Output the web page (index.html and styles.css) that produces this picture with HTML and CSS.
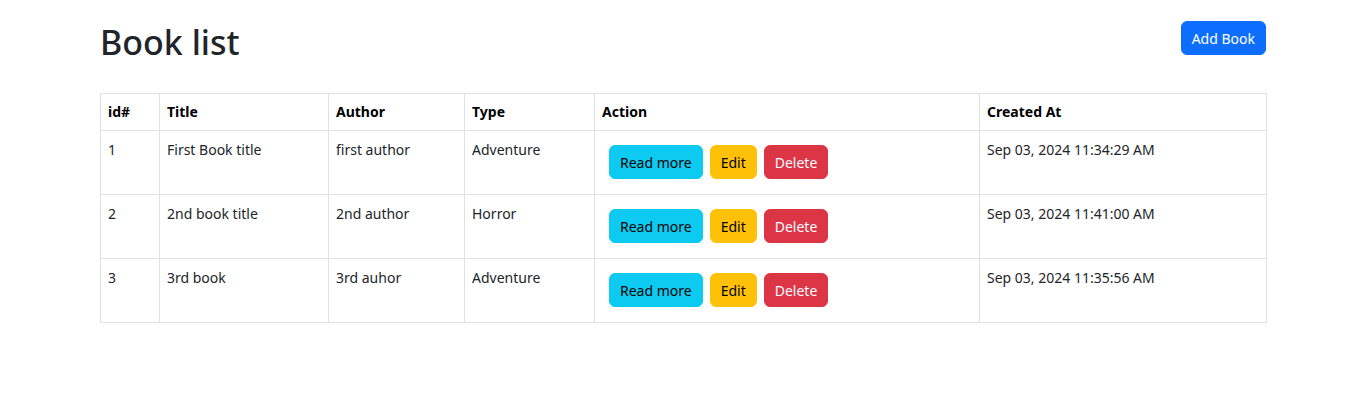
FILE: index.html
```html
<!DOCTYPE html>
<html lang="en">
<head>
<meta charset="utf-8">
<title>Book list</title>
<link rel="stylesheet" href="styles.css">
</head>
<body>
<main class="page">
  <header class="page-head">
    <h1 class="title">Book list</h1>
    <a class="btn btn-primary" href="#">Add Book</a>
  </header>
  <table class="book-table">
    <colgroup>
      <col class="c-id"><col class="c-title"><col class="c-author"><col class="c-type"><col class="c-action"><col class="c-created">
    </colgroup>
    <thead>
      <tr><th>id#</th><th>Title</th><th>Author</th><th>Type</th><th>Action</th><th>Created At</th></tr>
    </thead>
    <tbody>
      <tr>
        <td>1</td><td>First Book title</td><td>first author</td><td>Adventure</td>
        <td class="actions"><div class="btn-group"><a class="btn btn-info" href="#">Read more</a><a class="btn btn-warning" href="#">Edit</a><a class="btn btn-danger" href="#">Delete</a></div></td>
        <td>Sep 03, 2024 11:34:29 AM</td>
      </tr>
      <tr>
        <td>2</td><td>2nd book title</td><td>2nd author</td><td>Horror</td>
        <td class="actions"><div class="btn-group"><a class="btn btn-info" href="#">Read more</a><a class="btn btn-warning" href="#">Edit</a><a class="btn btn-danger" href="#">Delete</a></div></td>
        <td>Sep 03, 2024 11:41:00 AM</td>
      </tr>
      <tr>
        <td>3</td><td>3rd book</td><td>3rd auhor</td><td>Adventure</td>
        <td class="actions"><div class="btn-group"><a class="btn btn-info" href="#">Read more</a><a class="btn btn-warning" href="#">Edit</a><a class="btn btn-danger" href="#">Delete</a></div></td>
        <td>Sep 03, 2024 11:35:56 AM</td>
      </tr>
    </tbody>
  </table>
</main>
</body>
</html>
```
FILE: styles.css
```css
* { box-sizing: border-box; }
html, body { margin: 0; padding: 0; background: #fff; }
body {
  font-family: "Noto Sans", "Open Sans", sans-serif;
  font-size: 14px;
  line-height: 21px;
  color: #212529;
}
.page {
  width: 1166px;
  margin-left: 100px;
  padding-top: 21px;
}
.page-head {
  display: flex;
  justify-content: space-between;
  align-items: flex-start;
  height: 72px;
}
.title {
  margin: 0;
  font-size: 34px;
  line-height: 43px;
  font-weight: 500;
  color: #212529;
}
.btn {
  display: inline-flex;
  align-items: center;
  justify-content: center;
  height: 34px;
  padding: 0 10px;
  border: 1px solid transparent;
  border-radius: 6px;
  font-size: 14px;
  text-decoration: none;
  white-space: nowrap;
}
.btn-primary { background: #0d6efd; border-color: #0d6efd; color: #fff; }
.btn-info { background: #0dcaf0; border-color: #0dcaf0; color: #000; }
.btn-warning { background: #ffc107; border-color: #ffc107; color: #000; }
.btn-danger { background: #dc3545; border-color: #dc3545; color: #fff; }

.book-table {
  width: 1166px;
  border-collapse: collapse;
  table-layout: fixed;
}
.c-id { width: 59px; }
.c-title { width: 169px; }
.c-author { width: 136px; }
.c-type { width: 130px; }
.c-action { width: 385px; }
.c-created { width: 287px; }
.book-table th,
.book-table td {
  border: 1px solid #dee2e6;
  padding: 8px 7px 7px;
  text-align: left;
  vertical-align: top;
  white-space: nowrap;
}
.book-table th {
  font-weight: 700;
  color: #000;
  padding-top: 7px;
  padding-bottom: 8px;
}
.book-table td { color: #212529; }
.book-table td.actions { padding: 7px 7px 8px; }
.btn-group {
  display: flex;
  gap: 7px;
  padding: 7px;
}
```
